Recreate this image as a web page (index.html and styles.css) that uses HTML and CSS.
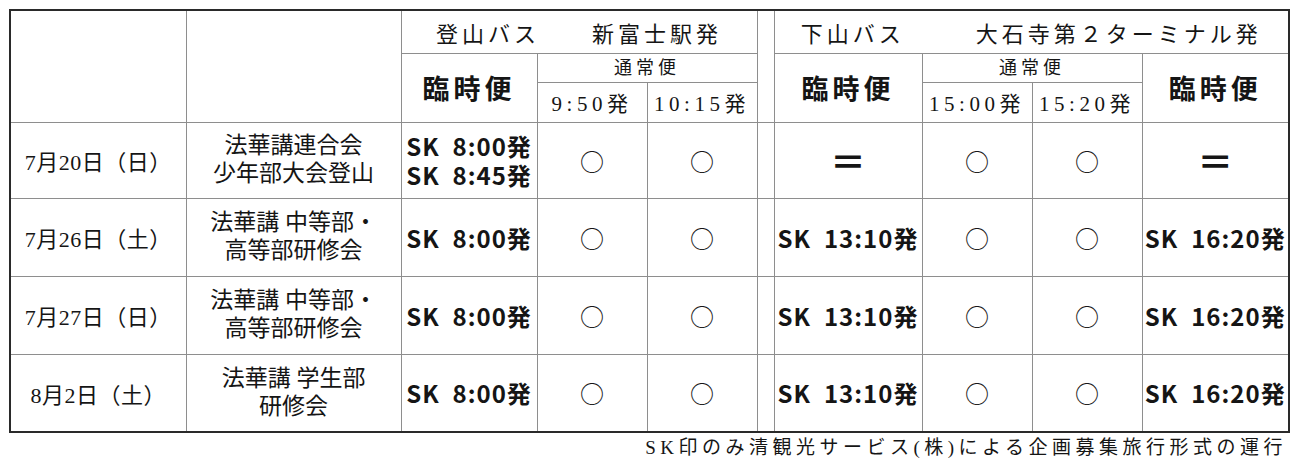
FILE: index.html
```html
<!DOCTYPE html>
<html lang="ja">
<head>
<meta charset="utf-8">
<title>バス運行表</title>
<link rel="stylesheet" href="styles.css">
</head>
<body>
<div class="page">
  <table class="schedule">
    <colgroup>
      <col class="c-date"><col class="c-event"><col class="c-rinji1"><col class="c-t1"><col class="c-t2">
      <col class="c-gap"><col class="c-rinji2"><col class="c-t3"><col class="c-t4"><col class="c-rinji3">
    </colgroup>
    <thead>
      <tr class="h1">
        <th rowspan="3"></th>
        <th rowspan="3"></th>
        <th colspan="3" class="title">登山バス　　新富士駅発</th>
        <th rowspan="3" class="gap"></th>
        <th colspan="4" class="title">下山バス　　  大石寺第２ターミナル発</th>
      </tr>
      <tr class="h2">
        <th rowspan="2" class="rinji">臨時便</th>
        <th colspan="2" class="tsujo">通常便</th>
        <th rowspan="2" class="rinji">臨時便</th>
        <th colspan="2" class="tsujo">通常便</th>
        <th rowspan="2" class="rinji">臨時便</th>
      </tr>
      <tr class="h3">
        <th class="time">9:50発</th>
        <th class="time">10:15発</th>
        <th class="time">15:00発</th>
        <th class="time">15:20発</th>
      </tr>
    </thead>
    <tbody>
      <tr class="row row-first">
        <td class="date">7月20日（日）</td>
        <td class="event">法華講連合会<br>少年部大会登山</td>
        <td class="sk"><span class="line">SK&nbsp;&nbsp;8:00発</span><span class="line">SK&nbsp;&nbsp;8:45発</span></td>
        <td class="mark">○</td>
        <td class="mark">○</td>
        <td class="gap"></td>
        <td class="eq">＝</td>
        <td class="mark">○</td>
        <td class="mark">○</td>
        <td class="eq">＝</td>
      </tr>
      <tr class="row">
        <td class="date">7月26日（土）</td>
        <td class="event">法華講 中等部・<br>高等部研修会</td>
        <td class="sk">SK&nbsp;&nbsp;8:00発</td>
        <td class="mark">○</td>
        <td class="mark">○</td>
        <td class="gap"></td>
        <td class="sk">SK&nbsp;&nbsp;13:10発</td>
        <td class="mark">○</td>
        <td class="mark">○</td>
        <td class="sk">SK&nbsp;&nbsp;16:20発</td>
      </tr>
      <tr class="row">
        <td class="date">7月27日（日）</td>
        <td class="event">法華講 中等部・<br>高等部研修会</td>
        <td class="sk">SK&nbsp;&nbsp;8:00発</td>
        <td class="mark">○</td>
        <td class="mark">○</td>
        <td class="gap"></td>
        <td class="sk">SK&nbsp;&nbsp;13:10発</td>
        <td class="mark">○</td>
        <td class="mark">○</td>
        <td class="sk">SK&nbsp;&nbsp;16:20発</td>
      </tr>
      <tr class="row">
        <td class="date">8月2日（土）</td>
        <td class="event">法華講 学生部<br>研修会</td>
        <td class="sk">SK&nbsp;&nbsp;8:00発</td>
        <td class="mark">○</td>
        <td class="mark">○</td>
        <td class="gap"></td>
        <td class="sk">SK&nbsp;&nbsp;13:10発</td>
        <td class="mark">○</td>
        <td class="mark">○</td>
        <td class="sk">SK&nbsp;&nbsp;16:20発</td>
      </tr>
    </tbody>
  </table>
  <p class="note">SK印のみ清観光サービス(株)による企画募集旅行形式の運行</p>
</div>
</body>
</html>
```

FILE: styles.css
```css
html, body {
  margin: 0;
  padding: 0;
  background: #ffffff;
}

body {
  font-family: "Liberation Serif", "Noto Sans CJK JP", serif;
  color: #151515;
}

.page {
  padding: 9px 0 0 9px;
  width: 1281px;
}

.schedule {
  border-collapse: collapse;
  table-layout: fixed;
  width: 1281px;
  border: 2px solid #2a2a2a;
}

.c-date { width: 176px; }
.c-event { width: 215px; }
.c-rinji1 { width: 136px; }
.c-t1 { width: 110px; }
.c-t2 { width: 110px; }
.c-gap { width: 17px; }
.c-rinji2 { width: 148px; }
.c-t3 { width: 110px; }
.c-t4 { width: 110px; }
.c-rinji3 { width: 147px; }

.schedule th,
.schedule td {
  border: 1px solid #8e8e8e;
  padding: 0;
  text-align: center;
  vertical-align: middle;
  font-weight: 400;
  white-space: pre;
}

.h1 { height: 43px; }
.h2 { height: 29px; }
.h3 { height: 40px; }
.row { height: 78px; }
.row-first { height: 76px; }

.title {
  font-size: 22px;
  letter-spacing: 4px;
}

.tsujo {
  font-size: 18px;
  letter-spacing: 4px;
  line-height: 20px;
}

.time {
  font-size: 21px;
  letter-spacing: 4.5px;
}

.rinji {
  font-family: "Noto Sans CJK JP", sans-serif;
  font-size: 27px;
  font-weight: 700 !important;
  letter-spacing: 4px;
}

.date {
  font-size: 22px;
  letter-spacing: 0.5px;
}

.event {
  font-size: 23px;
  line-height: 28px;
}

.sk {
  font-family: "Noto Sans CJK JP", sans-serif;
  font-size: 24px;
  font-weight: 700 !important;
  line-height: 29px;
  letter-spacing: 1px;
}

.sk .line {
  display: block;
  height: 29px;
  line-height: 29px;
}

.mark {
  font-family: "Noto Sans CJK JP", sans-serif;
  font-size: 24px;
}

.eq {
  font-family: "Noto Sans CJK JP", sans-serif;
  font-size: 36px;
  font-weight: 700 !important;
}

.note {
  margin: 3px 0 0;
  text-align: right;
  padding-right: 3px;
  font-size: 19px;
  letter-spacing: 4.5px;
  line-height: 24px;
}
```
